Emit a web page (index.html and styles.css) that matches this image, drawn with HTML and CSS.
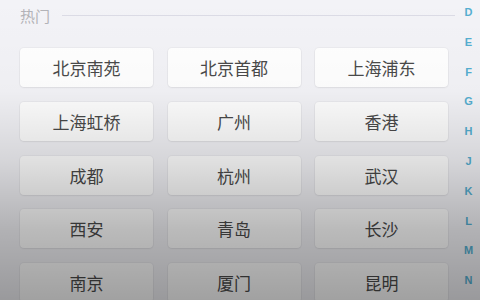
FILE: index.html
```html
<!DOCTYPE html>
<html lang="zh">
<head>
<meta charset="utf-8">
<link rel="stylesheet" href="styles.css">
</head>
<body>
<div class="page">
  <main class="main">
    <div class="section-head">
      <span class="section-title">热门</span>
      <span class="section-line"></span>
    </div>
    <div class="city-grid">
      <div class="city">北京南苑</div>
      <div class="city">北京首都</div>
      <div class="city">上海浦东</div>
      <div class="city">上海虹桥</div>
      <div class="city">广州</div>
      <div class="city">香港</div>
      <div class="city">成都</div>
      <div class="city">杭州</div>
      <div class="city">武汉</div>
      <div class="city">西安</div>
      <div class="city">青岛</div>
      <div class="city">长沙</div>
      <div class="city">南京</div>
      <div class="city">厦门</div>
      <div class="city">昆明</div>
    </div>
  </main>
  <nav class="index-bar">
    <span>D</span><span>E</span><span>F</span><span>G</span><span>H</span>
    <span>J</span><span>K</span><span>L</span><span>M</span><span>N</span>
  </nav>
  <div class="shade"></div>
</div>
</body>
</html>
```
FILE: styles.css
```css
html, body {
  margin: 0;
  padding: 0;
}
body {
  width: 480px;
  height: 300px;
  overflow: hidden;
  background: #f3f3f7;
  font-family: "Noto Sans CJK SC", "Noto Sans", sans-serif;
}
.page {
  position: relative;
  display: flex;
  width: 480px;
  height: 300px;
  overflow: hidden;
}
.main {
  width: 435px;
  padding-left: 20px;
  flex: none;
}
.section-head {
  display: flex;
  align-items: center;
  height: 20px;
  margin-top: 6px;
  gap: 12px;
}
.section-title {
  font-size: 15px;
  line-height: 20px;
  color: #b3b3b8;
}
.section-line {
  flex: 1;
  height: 1px;
  background: #dcdce6;
  margin-top: -2px;
}
.city-grid {
  display: grid;
  grid-template-columns: 133px 133px 133px;
  grid-auto-rows: 39px;
  column-gap: 14.5px;
  row-gap: 14.75px;
  margin-top: 22px;
}
.city {
  background: #ffffff;
  border-radius: 4px;
  box-shadow: 0 0 0 1px rgba(0, 0, 0, 0.03), 0 1px 2px rgba(0, 0, 0, 0.05);
  display: flex;
  align-items: center;
  justify-content: center;
  font-size: 17px;
  color: #4a4a4a;
}
.index-bar {
  flex: 1;
  display: flex;
  flex-direction: column;
  align-items: center;
  margin-top: -2px;
  padding-left: 2px;
}
.index-bar span {
  height: 29.8px;
  line-height: 29.8px;
  font-family: "Liberation Sans", sans-serif;
  font-size: 11px;
  font-weight: bold;
  color: #55aed0;
}
.shade {
  position: absolute;
  inset: 0;
  pointer-events: none;
  background: linear-gradient(to bottom,
    rgba(0, 0, 0, 0) 0px,
    rgba(0, 0, 0, 0.02) 90px,
    rgba(0, 0, 0, 0.12) 160px,
    rgba(0, 0, 0, 0.27) 230px,
    rgba(0, 0, 0, 0.37) 300px);
}
```
